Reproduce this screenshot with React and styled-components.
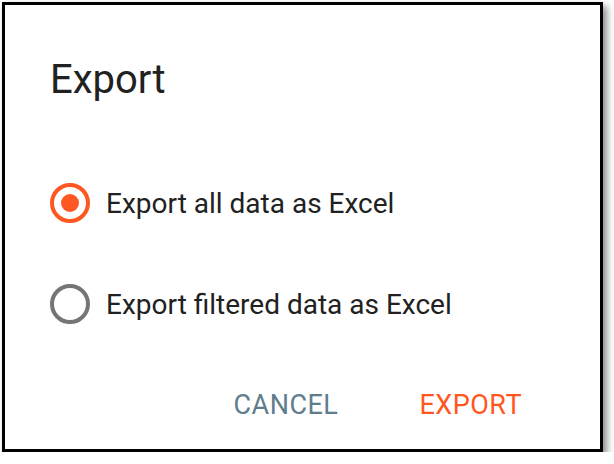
import React, { useState } from 'react';
import styled, { createGlobalStyle } from 'styled-components';

const GlobalStyle = createGlobalStyle`
    body{
        margin: 0;
        background: #ffffff;
        font-family: Roboto, "Liberation Sans", sans-serif;
    }
`

const options = [
    { id: 'all', label: 'Export all data as Excel' },
    { id: 'filtered', label: 'Export filtered data as Excel' },
];

function App() {
    const [choice, setChoice] = useState('all');

    return (
        <>
            <GlobalStyle />
            <Dialog>
                <Title>Export</Title>
                <Options>
                    {options.map(opt => (
                        <Option key={opt.id} onClick={() => setChoice(opt.id)}>
                            <Radio checked={choice === opt.id} />
                            <span>{opt.label}</span>
                        </Option>
                    ))}
                </Options>
                <Actions>
                    <ActionButton color='#607d8b'>Cancel</ActionButton>
                    <ActionButton color='#ff5722'>Export</ActionButton>
                </Actions>
            </Dialog>
        </>
    );
}

export default App;

const Dialog = styled.div`
    box-sizing: border-box;
    margin: 2px 0 0 2px;
    width: 601px;
    height: 450px;
    border: 3px solid #000000;
    background: #ffffff;
    box-shadow: 4px 4px 7px rgba(0, 0, 0, 0.45);
    padding: 51px 0 0 45px;
    display: flex;
    flex-direction: column;
`

const Title = styled.h2`
    margin: 0;
    font-size: 40px;
    line-height: 48px;
    font-weight: 400;
    color: #212121;
`

const Options = styled.div`
    margin-top: 79px;
    display: flex;
    flex-direction: column;
    gap: 61px;
`

const Option = styled.label`
    display: flex;
    align-items: center;
    gap: 16px;
    height: 40px;
    font-size: 28px;
    color: #212121;
    cursor: pointer;
`

const Radio = styled.span`
    box-sizing: border-box;
    width: 40px;
    height: 40px;
    border-radius: 50%;
    border: 4px solid ${({ checked }) => (checked ? '#ff5722' : '#757575')};
    display: flex;
    align-items: center;
    justify-content: center;
    &::after{
        content: '';
        width: 18px;
        height: 18px;
        border-radius: 50%;
        background: #ff5722;
        display: ${({ checked }) => (checked ? 'block' : 'none')};
    }
`

const Actions = styled.div`
    margin-top: 63px;
    display: flex;
    justify-content: flex-end;
    gap: 81px;
    padding-right: 78px;
`

const ActionButton = styled.button`
    border: none;
    background: none;
    padding: 0;
    font-family: inherit;
    font-size: 27px;
    line-height: 36px;
    font-weight: 400;
    letter-spacing: 0.5px;
    text-transform: uppercase;
    color: ${({ color }) => color};
    cursor: pointer;
`
